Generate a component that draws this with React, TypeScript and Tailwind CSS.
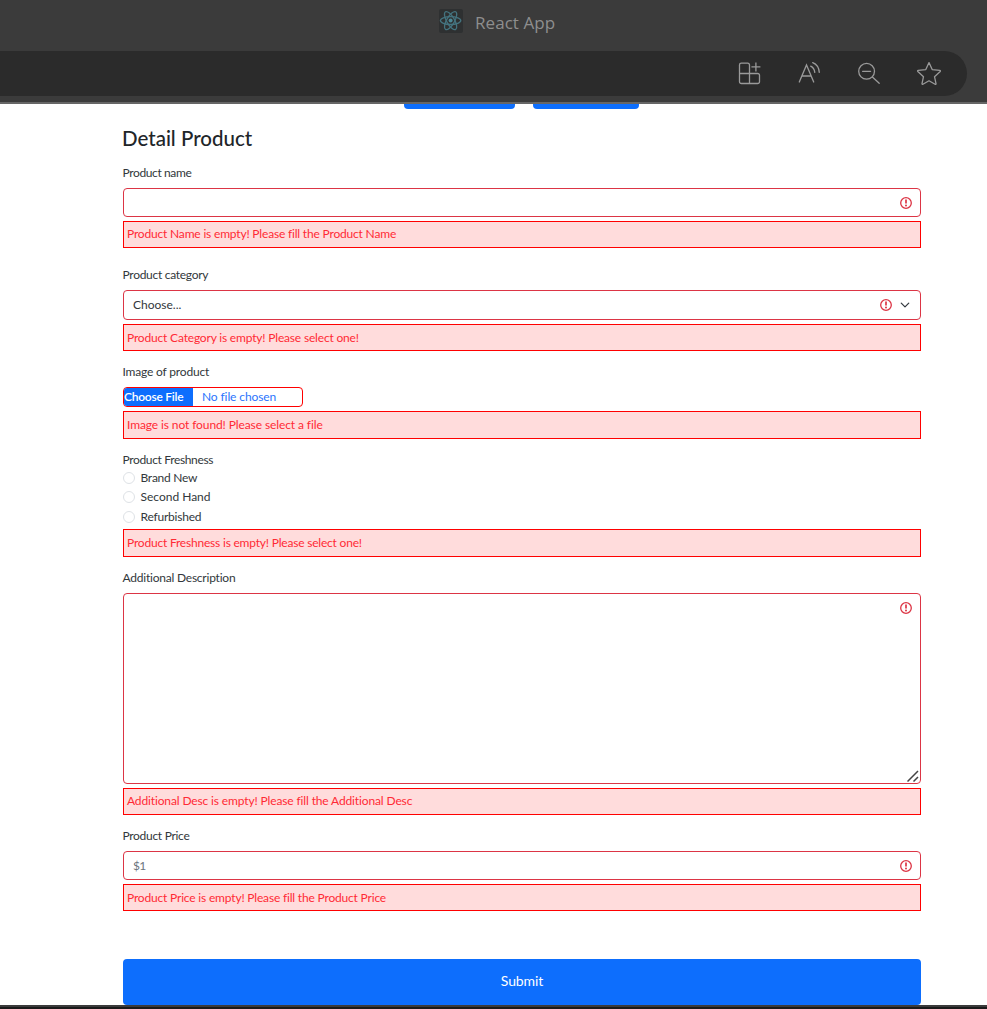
import type { ReactNode } from 'react';

function ReactLogo() {
  return (
    <svg className="h-6 w-6" viewBox="0 0 24 24" fill="none" stroke="#44737f" strokeWidth="1.3">
      <rect x="0" y="0" width="24" height="24" rx="2" fill="#2e3031" stroke="none" />
      <g transform="translate(11.6 11.6)">
        <ellipse rx="10.2" ry="3.9" />
        <ellipse rx="10.2" ry="3.9" transform="rotate(60)" />
        <ellipse rx="10.2" ry="3.9" transform="rotate(120)" />
        <circle r="2" fill="#4b8795" stroke="none" />
      </g>
    </svg>
  );
}

function BrowserChrome() {
  return (
    <header className="h-[104px] shrink-0 border-b-2 border-[#666666] bg-[#3b3b3b]">
      <div className="flex h-[51px] items-start gap-3 pl-[439px] pt-[9px]">
        <ReactLogo />
        <span className="whitespace-nowrap font-['Open_Sans',sans-serif] text-[17px] leading-[27px] tracking-[0.05px] text-[#8e8e8e]">React App</span>
      </div>
      <div className="flex h-[45px] w-[967px] items-center justify-end gap-8 rounded-r-full bg-[#2b2b2b] pb-0.5 pr-6 text-[#9a9a9a]">
        <svg className="h-7 w-7" viewBox="0 0 28 28" fill="none" stroke="currentColor" strokeWidth="1.3">
          <path d="M14.5 24.500V6a1.800 1.800 0 0 0-1.800-1.800H6.300A1.800 1.800 0 0 0 4.500 6v16.700a1.800 1.800 0 0 0 1.800 1.800h16.400a1.800 1.800 0 0 0 1.800-1.800v-6.400a1.800 1.800 0 0 0-1.800-1.800H4.500M20.900 3.400v9M16.400 7.900h9" />
        </svg>
        <svg className="h-7 w-7" viewBox="0 0 28 28" fill="none" stroke="currentColor" strokeWidth="1.3" strokeLinecap="round">
          <path d="M4.300 23 11.500 6l7.200 17M6.900 17h9.200M15.700 7.200c2.200 1 3.700 3.200 4.100 6.200M17.700 3.600c4 1.600 6.300 5.200 6.600 9.800" />
        </svg>
        <svg className="h-7 w-7" viewBox="0 0 28 28" fill="none" stroke="currentColor" strokeWidth="1.3" strokeLinecap="round">
          <circle cx="11.6" cy="12.3" r="7.900" />
          <path d="M7.600 12.300h8M17.400 18l6.800 6.300" />
        </svg>
        <svg className="h-7 w-7" viewBox="0 0 28 28" fill="none" stroke="currentColor" strokeWidth="1.3" strokeLinejoin="round">
          <path d="m14 3.600 3.200 7 7.600.8c.6.1.8.7.4 1.100l-5.700 5.200 1.500 7c.1.600-.4.900-.9.600L14 21.800l-6.100 3.500c-.5.300-1-.1-.9-.6l1.500-7-5.700-5.200c-.4-.4-.2-1 .4-1.100l7.600-.8Z" />
        </svg>
      </div>
    </header>
  );
}

function AlertIcon() {
  return (
    <svg className="h-3 w-3 shrink-0" viewBox="0 0 12 12" fill="none" stroke="#dc3545">
      <circle cx="6" cy="6" r="5.3" strokeWidth="1.3" />
      <path d="M6 2.600v4" strokeWidth="1.700" />
      <circle cx="6" cy="8.500" r="1" fill="#dc3545" stroke="none" />
    </svg>
  );
}

function Label({ children, className }: { children: ReactNode; className: string }) {
  return <label className={`-ml-px block h-[18px] whitespace-nowrap pl-[0.5px] leading-[18px] ${className}`}>{children}</label>;
}

function ErrorBox({ children, className }: { children: ReactNode; className: string }) {
  return (
    <div className={`flex items-center whitespace-nowrap border border-[#f00] bg-[#ffdcdc] pl-[3px] text-[#ff2a35] ${className}`}>
      <span>{children}</span>
    </div>
  );
}

function Radio({ children, className }: { children: ReactNode; className: string }) {
  return (
    <div className="flex h-[18px] items-center gap-[5.5px]">
      <span className="h-3 w-3 rounded-full border border-[#dee2e6]" />
      <span className={className}>{children}</span>
    </div>
  );
}

const control = 'flex w-full rounded-[4px] border border-[#dc3545] bg-white';

export default function App() {
  return (
    <div className="flex h-[1009px] w-[987px] flex-col overflow-hidden bg-white font-['Lato',sans-serif] text-[12px] leading-[18px] text-[#32373b]">
      <BrowserChrome />
      <div className="flex h-[5px] shrink-0 gap-[18px] pl-[404px]">
        <div className="w-[111px] rounded-b-[4px] bg-[#0d6efd]" />
        <div className="w-[106px] rounded-b-[4px] bg-[#0d6efd]" />
      </div>
      <main className="ml-[123px] flex h-[896px] w-[798px] shrink-0 flex-col">
        <h1 className="-ml-px mt-[15px] h-7 whitespace-nowrap text-[20.5px] font-medium leading-[28px] text-[#212529]">Detail Product</h1>

        <Label className="mt-[12px] tracking-[-0.38px]">Product name</Label>
        <div className={`${control} mt-[6px] h-[29px] items-center justify-end pr-2`}>
          <AlertIcon />
        </div>
        <ErrorBox className="mt-1 h-[27px] pb-px tracking-[-0.183px]">Product Name is empty! Please fill the Product Name</ErrorBox>

        <Label className="mt-[18px] tracking-[-0.284px]">Product category</Label>
        <div className={`${control} mt-[6px] h-[30px] items-center pl-[9px] pr-[10px]`}>
          <span className="grow">Choose...</span>
          <AlertIcon />
          <svg className="ml-2 h-[10px] w-[10px]" viewBox="0 0 16 16" fill="none" stroke="#343a40" strokeWidth="2" strokeLinecap="round" strokeLinejoin="round">
            <path d="m2 5 6 6 6-6" />
          </svg>
        </div>
        <ErrorBox className="mt-1 h-[27px] tracking-[-0.18px]">Product Category is empty! Please select one!</ErrorBox>

        <Label className="mt-[12px] tracking-[-0.18px]">Image of product</Label>
        <div className="mt-[6px] flex h-5 w-[180px] items-stretch overflow-hidden rounded-[4px] border border-[#f00] leading-[18px]">
          <span className="w-[69px] whitespace-nowrap bg-[#0d6efd] font-semibold tracking-[-0.25px] text-white">Choose File</span>
          <span className="pl-[9px] tracking-[-0.109px] text-[#2b74fd]">No file chosen</span>
        </div>
        <ErrorBox className="mt-1 h-[28px] tracking-[-0.104px]">Image is not found! Please select a file</ErrorBox>

        <Label className="mt-[12px] tracking-[-0.349px]">Product Freshness</Label>
        <div className="flex h-[60px] flex-col">
          <Radio className="tracking-[-0.254px]">Brand New</Radio>
          <div className="h-px" />
          <Radio className="tracking-[-0.009px]">Second Hand</Radio>
          <div className="h-0.5" />
          <Radio className="tracking-[-0.222px]">Refurbished</Radio>
        </div>
        <ErrorBox className="h-[28px] tracking-[-0.205px]">Product Freshness is empty! Please select one!</ErrorBox>

        <Label className="mt-[12px] tracking-[-0.22px]">Additional Description</Label>
        <div className={`${control} mt-[6px] h-[191px] flex-col items-end justify-between pb-px pr-px pt-2`}>
          <span className="pr-[7px]"><AlertIcon /></span>
          <svg className="h-3 w-3" viewBox="0 0 12 12" fill="none" stroke="#444" strokeWidth="1.5">
            <path d="M.5 11.500 11 1M6.500 11.500 11 7" />
          </svg>
        </div>
        <ErrorBox className="mt-1 h-[27px] pb-px tracking-[-0.135px]">Additional Desc is empty! Please fill the Additional Desc</ErrorBox>

        <Label className="mt-[12px] tracking-[-0.3px]">Product Price</Label>
        <div className={`${control} mt-[6px] h-[29px] items-center justify-between pl-[9px] pr-2`}>
          <span className="tracking-[-0.6px] text-[#6c757d]">$1</span>
          <AlertIcon />
        </div>
        <ErrorBox className="mt-1 h-[27px] tracking-[-0.182px]">Product Price is empty! Please fill the Product Price</ErrorBox>

        <button type="button" className="mt-12 h-[46px] rounded-[4px] bg-[#0d6efd] pb-0.5 text-[14px] tracking-[-0.099px] text-white">Submit</button>
      </main>
      <footer className="h-1 shrink-0 border-t-2 border-[#3b3b3b] bg-[#1a1a1a]" />
    </div>
  );
}
